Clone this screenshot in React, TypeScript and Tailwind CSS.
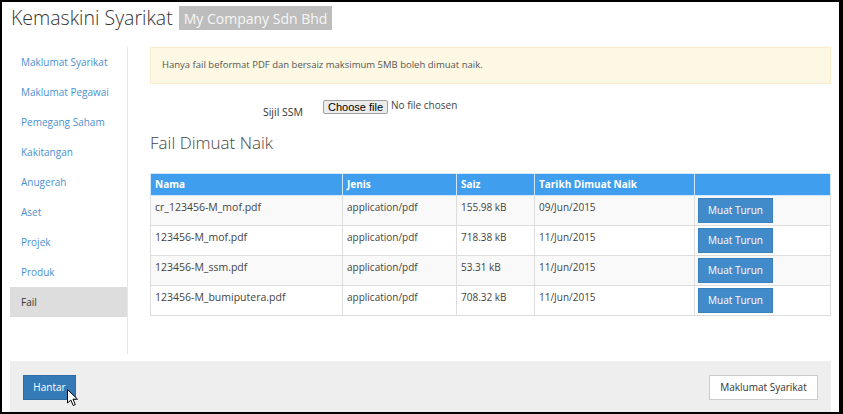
const sideItems = [
  "Maklumat Syarikat",
  "Maklumat Pegawai",
  "Pemegang Saham",
  "Kakitangan",
  "Anugerah",
  "Aset",
  "Projek",
  "Produk",
  "Fail",
];

const files = [
  { name: "cr_123456-M_mof.pdf", type: "application/pdf", size: "155.98 kB", date: "09/Jun/2015" },
  { name: "123456-M_mof.pdf", type: "application/pdf", size: "718.38 kB", date: "11/Jun/2015" },
  { name: "123456-M_ssm.pdf", type: "application/pdf", size: "53.31 kB", date: "11/Jun/2015" },
  { name: "123456-M_bumiputera.pdf", type: "application/pdf", size: "708.32 kB", date: "11/Jun/2015" },
];

export default function App() {
  return (
    <div
      className="relative w-[843px] h-[414px] bg-black pt-[2px] pl-[2px] pr-[4px] pb-[2px] text-[10px] text-[#333]"
      style={{ fontFamily: '"Open Sans", "Liberation Sans", sans-serif' }}
    >
      <div className="flex h-full flex-col bg-white">
        {/* Title */}
        <div className="flex h-[45px] items-start pl-[9px] pt-[4px]">
          <div className="flex h-[24px] items-center gap-[6px]">
            <h1 className="text-[19.5px] font-light leading-[24px] text-[#333]">Kemaskini Syarikat</h1>
            <span className="flex h-[24px] items-center bg-[#bdbdbd] px-[5px] text-[14px] text-[#f7f7f7]">
              My Company Sdn Bhd
            </span>
          </div>
        </div>

        {/* Body */}
        <div className="mx-[8px] flex h-[307px]">
          <ul className="w-[119px] border-r border-[#e6e6e6]">
            {sideItems.map((item) => (
              <li
                key={item}
                className={
                  item === "Fail"
                    ? "flex h-[30px] items-center bg-[#dddddd] pl-[11px] text-[#333]"
                    : "flex h-[30px] items-center pl-[11px] text-[#4a8fd0]"
                }
              >
                {item}
              </li>
            ))}
          </ul>

          <div className="flex-1 pl-[22px]">
            <div className="flex h-[37px] items-center border border-[#faebcc] bg-[#fcf8e3] px-[11px] text-[9.5px] text-[#555]">
              Hanya fail beformat PDF dan bersaiz maksimum 5MB boleh dimuat naik.
            </div>

            <div className="mt-[13px] flex h-[24px]">
              <div className="w-[153px] pt-[7px] text-right text-[10.5px] leading-[16px] text-[#333]">Sijil SSM</div>
              <div className="ml-[20px] flex items-start pt-[3px]">
                <span
                  className="flex h-[14px] items-center rounded-[2px] border border-[#a0a0a0] bg-[#ececec] px-[4px] text-[11px] text-black"
                  style={{ fontFamily: '"Liberation Sans", Arial, sans-serif' }}
                >
                  Choose file
                </span>
                <span className="ml-[3px] leading-[11px] text-[#444]">No file chosen</span>
              </div>
            </div>

            <h2 className="mt-[11px] h-[22px] text-[17px] font-light leading-[22px] text-[#444]">Fail Dimuat Naik</h2>

            <table className="mt-[19px] w-[680px] table-fixed border-collapse border border-[#ddd]">
              <colgroup>
                <col className="w-[192px]" />
                <col className="w-[114px]" />
                <col className="w-[78px]" />
                <col className="w-[160px]" />
                <col className="w-[136px]" />
              </colgroup>
              <thead>
                <tr className="bg-[#3f9fee] text-white">
                  <th className="border border-[#cfe6fb] px-[4px] py-[3px] text-left font-bold leading-[15px]">Nama</th>
                  <th className="border border-[#cfe6fb] px-[4px] py-[3px] text-left font-bold leading-[15px]">Jenis</th>
                  <th className="border border-[#cfe6fb] px-[4px] py-[3px] text-left font-bold leading-[15px]">Saiz</th>
                  <th className="border border-[#cfe6fb] px-[4px] py-[3px] text-left font-bold leading-[15px]">Tarikh Dimuat Naik</th>
                  <th className="border border-[#cfe6fb] px-[4px] py-[3px]"></th>
                </tr>
              </thead>
              <tbody>
                {files.map((f, i) => (
                  <tr key={f.name} className={i % 2 === 0 ? "bg-[#f9f9f9]" : "bg-white"}>
                    <td className="border border-[#ddd] px-[4px] pt-[3px] align-top text-[10.5px] leading-[16px] text-[#444]">{f.name}</td>
                    <td className="border border-[#ddd] px-[4px] pt-[3px] align-top leading-[16px] text-[#444]">{f.type}</td>
                    <td className="border border-[#ddd] px-[4px] pt-[3px] align-top leading-[16px] text-[#444]">{f.size}</td>
                    <td className="border border-[#ddd] px-[4px] pt-[3px] align-top leading-[16px] text-[#444]">{f.date}</td>
                    <td className="border border-[#ddd] px-[3px] py-[2px] align-top">
                      <button className="flex h-[25px] w-[75px] items-center justify-center border border-[#3a7fc0] bg-[#428bca] text-[10px] text-white">
                        Muat Turun
                      </button>
                    </td>
                  </tr>
                ))}
              </tbody>
            </table>
          </div>
        </div>

        {/* Footer */}
        <div className="mx-[8px] mt-[7px] flex h-[51px] items-start justify-between bg-[#eeeeee] px-[13px] pt-[14px]">
          <button className="flex h-[25px] w-[53px] items-center justify-center border border-[#2e6da4] bg-[#337ab7] text-[10px] text-white">
            Hantar
          </button>
          <button className="flex h-[25px] w-[109px] items-center justify-center border border-[#ccc] bg-white text-[10px] text-[#333]">
            Maklumat Syarikat
          </button>
        </div>
      </div>

      {/* mouse pointer */}
      <svg className="absolute left-[67px] top-[389px]" width="12" height="18" viewBox="0 0 12 18">
        <path d="M0.5 0.5 L0.5 14 L3.8 11 L6.2 16.5 L8.3 15.6 L6 10.2 L10.5 10.2 Z" fill="white" stroke="black" strokeWidth="1" />
      </svg>
    </div>
  );
}
